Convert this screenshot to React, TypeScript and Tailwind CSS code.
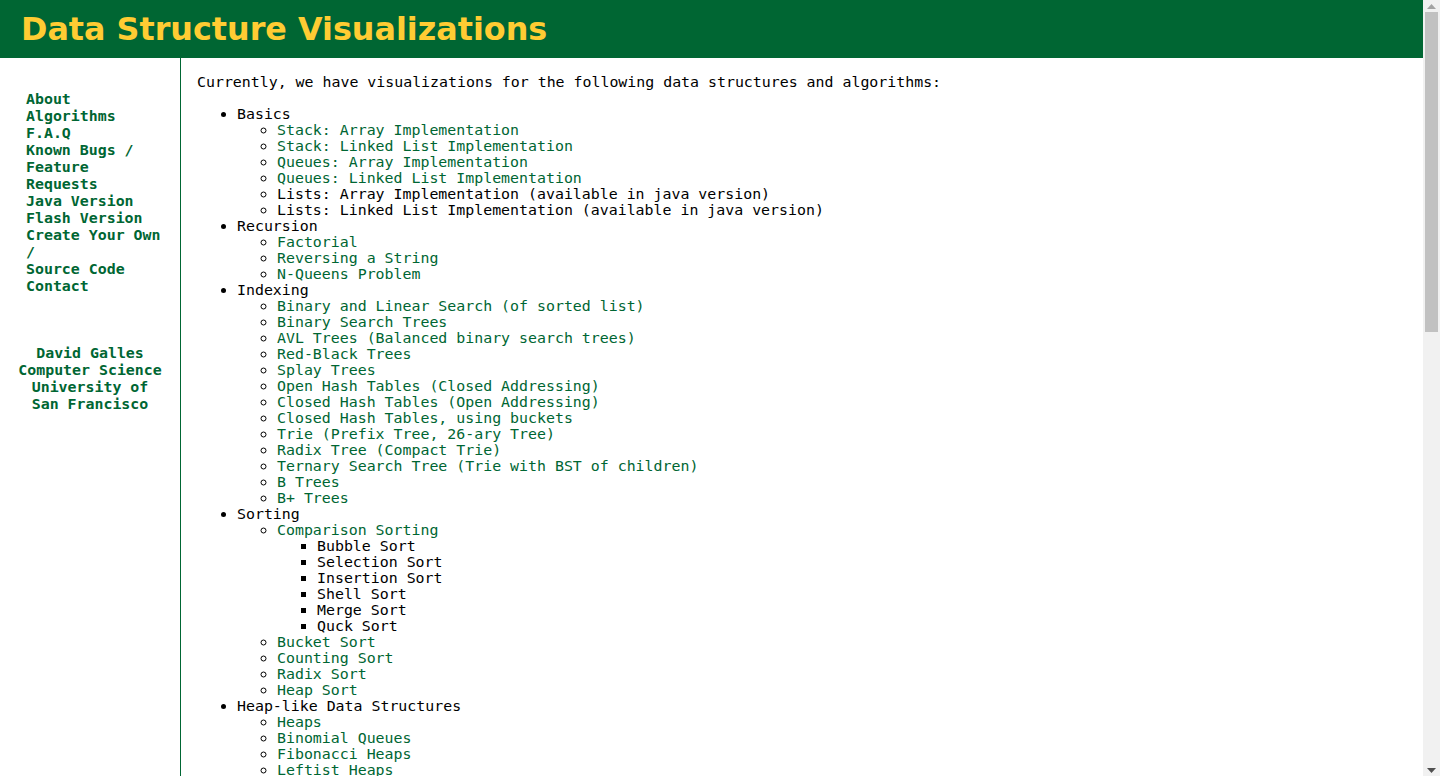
import type { ReactNode } from "react";

type Item = { label: string; link?: boolean; children?: Item[] };

const L = (label: string, children?: Item[]): Item => ({ label, link: true, children });
const T = (label: string, children?: Item[]): Item => ({ label, link: false, children });

const SECTIONS: Item[] = [
  T("Basics", [
    L("Stack: Array Implementation"),
    L("Stack: Linked List Implementation"),
    L("Queues: Array Implementation"),
    L("Queues: Linked List Implementation"),
    T("Lists: Array Implementation (available in java version)"),
    T("Lists: Linked List Implementation (available in java version)"),
  ]),
  T("Recursion", [L("Factorial"), L("Reversing a String"), L("N-Queens Problem")]),
  T("Indexing", [
    L("Binary and Linear Search (of sorted list)"),
    L("Binary Search Trees"),
    L("AVL Trees (Balanced binary search trees)"),
    L("Red-Black Trees"),
    L("Splay Trees"),
    L("Open Hash Tables (Closed Addressing)"),
    L("Closed Hash Tables (Open Addressing)"),
    L("Closed Hash Tables, using buckets"),
    L("Trie (Prefix Tree, 26-ary Tree)"),
    L("Radix Tree (Compact Trie)"),
    L("Ternary Search Tree (Trie with BST of children)"),
    L("B Trees"),
    L("B+ Trees"),
  ]),
  T("Sorting", [
    L("Comparison Sorting", [
      T("Bubble Sort"),
      T("Selection Sort"),
      T("Insertion Sort"),
      T("Shell Sort"),
      T("Merge Sort"),
      T("Quck Sort"),
    ]),
    L("Bucket Sort"),
    L("Counting Sort"),
    L("Radix Sort"),
    L("Heap Sort"),
  ]),
  T("Heap-like Data Structures", [
    L("Heaps"),
    L("Binomial Queues"),
    L("Fibonacci Heaps"),
    L("Leftist Heaps"),
    L("Skew Heaps"),
  ]),
  T("Graph Algorithms", [
    L("Breadth-First Search"),
    L("Depth-First Search"),
    L("Connected Components"),
    L("Dijkstra's Shortest Path"),
    L("Prim's Minimum Cost Spanning Tree"),
    L("Topological Sort (Using Indegree array)"),
    L("Topological Sort (Using DFS)"),
    L("Floyd-Warshall (all pairs shortest paths)"),
    L("Kruskal Minimum Cost Spanning Tree Algorithm"),
  ]),
  T("Dynamic Programming", [
    L("Calculating nth Fibonacci number"),
    L("Making Change"),
    L("Longest Common Subsequence"),
  ]),
  T("Geometric Algorithms", [
    L("2D Rotation and Scale Matrices"),
    L("2D Rotation and Translation Matrices"),
    L("2D Changing Coordinate Systems"),
    L("3D Rotation and Scale Matrices"),
    L("3D Changing Coordinate Systems"),
  ]),
  T("Others ...", [L("Disjoint Sets"), T("Huffman Coding (available in java version)")]),
];

// a "\n" inside a label is a hard break in the original markup
const NAV = [
  "About",
  "Algorithms",
  "F.A.Q",
  "Known Bugs / Feature Requests",
  "Java Version",
  "Flash Version",
  "Create Your Own /\nSource Code",
  "Contact",
];

const LIST_STYLE = ["list-disc", "list-[circle]", "list-[square]"];

function Tree({ items, depth }: { items: Item[]; depth: number }): ReactNode {
  return (
    <ul className={`${LIST_STYLE[depth] ?? "list-[square]"} pl-10`}>
      {items.map((it) => (
        <li key={it.label}>
          {it.link ? (
            <a href="#" className="text-[#006633] no-underline">
              {it.label}
            </a>
          ) : (
            it.label
          )}
          {it.children && <Tree items={it.children} depth={depth + 1} />}
        </li>
      ))}
    </ul>
  );
}

// window scrollbar, page scrolled to the top
function ScrollBar() {
  return (
    <div className="flex w-[17px] shrink-0 flex-col bg-[#f1f1f1]">
      <div className="flex h-[12px] items-center justify-center">
        <svg width="9" height="5" viewBox="0 0 9 5">
          <path d="M0 5L4.5 0L9 5Z" fill="#a3a3a3" />
        </svg>
      </div>
      <div className="mx-[2px] h-[320px] bg-[#c1c1c1]" />
      <div className="flex-1" />
      <div className="flex h-[12px] items-center justify-center">
        <svg width="9" height="5" viewBox="0 0 9 5">
          <path d="M0 0L9 0L4.5 5Z" fill="#505050" />
        </svg>
      </div>
    </div>
  );
}

export default function App() {
  return (
    <div className="flex h-screen overflow-hidden bg-white font-['DejaVu_Sans_Mono',monospace] text-[14.9px] leading-4 text-black">
      <div className="min-w-0 flex-1 overflow-hidden">
        <header className="flex h-[58px] items-center bg-[#006633] pl-[21px]">
          <h1 className="font-['DejaVu_Sans',sans-serif] text-[31.8px] font-bold text-[#ffcc33]">
            Data Structure Visualizations
          </h1>
        </header>

        <div className="flex">
          {/* Sidebar */}
          <aside className="w-[181px] shrink-0 border-r border-[#006633] pt-[33px] leading-[17px] font-bold">
            <nav className="pl-[26px] pr-[16px]">
              {NAV.map((n) => (
                <a key={n} href="#" className="block whitespace-pre-line text-[#006633]">
                  {n}
                </a>
              ))}
            </nav>
            <div className="mt-[50px] text-center text-[#006633]">
              <p>David Galles</p>
              <p>Computer Science</p>
              <p>University of</p>
              <p>San Francisco</p>
            </div>
          </aside>

          {/* Main */}
          <main className="min-w-0 flex-1 pl-4 pr-4 pb-4">
            <p className="my-4">
              Currently, we have visualizations for the following data structures and algorithms:
            </p>
            <Tree items={SECTIONS} depth={0} />
            <p className="my-4">
              Many of these are still in progress. Feedback and bug reports are always welcome.
            </p>
          </main>
        </div>
      </div>
      <ScrollBar />
    </div>
  );
}
